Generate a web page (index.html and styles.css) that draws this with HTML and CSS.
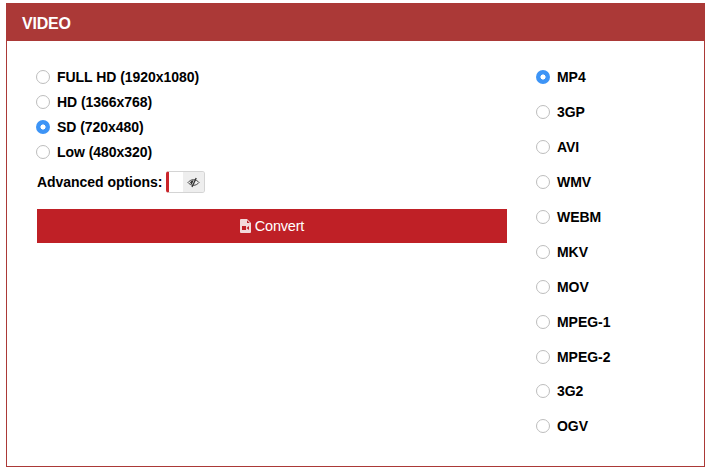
FILE: index.html
```html
<!DOCTYPE html>
<html lang="en">
<head>
<meta charset="utf-8">
<title>Video</title>
<link rel="stylesheet" href="styles.css">
</head>
<body>
<section class="panel">
  <h2 class="panel-head">VIDEO</h2>
  <div class="panel-body">
    <div class="left">
      <label class="opt"><span class="radio"></span>FULL HD (1920x1080)</label>
      <label class="opt"><span class="radio"></span>HD (1366x768)</label>
      <label class="opt"><span class="radio on"></span>SD (720x480)</label>
      <label class="opt"><span class="radio"></span>Low (480x320)</label>
      <div class="advanced">
        <span class="adv-label">Advanced options:</span>
        <span class="toggle">
          <span class="toggle-on"></span>
          <span class="toggle-off">
            <svg width="13" height="11" viewBox="0 0 13 11"><path d="M1 5.500C2.500 3.700 4.300 2.700 6.500 2.700s4 1 5.500 2.800c-1.500 1.800-3.300 2.800-5.500 2.800S2.500 7.300 1 5.500z" fill="none" stroke="#333" stroke-width=".9"/><path d="M3 5.500C3.500 4.200 4.800 3.300 6.700 3.200L4.800 7.500C4 7 3.400 6.300 3 5.500z" fill="#333"/><path d="M9.200 1 5 10" stroke="#333" stroke-width="1.300" fill="none"/></svg>
          </span>
        </span>
      </div>
      <button class="convert" type="button">
        <svg class="file-icon" width="11" height="14" viewBox="0 0 11 14"><path fill-rule="evenodd" d="M1 0h6l4 4v9a1 1 0 0 1-1 1H1a1 1 0 0 1-1-1V1a1 1 0 0 1 1-1zm6 1.200V4h2.800zM2 7v4h4V7zm4.500 2 2.500 2V7z" fill="#f3d9da"/></svg>
        Convert
      </button>
    </div>
    <div class="right">
      <label class="opt fmt"><span class="radio on"></span>MP4</label>
      <label class="opt fmt"><span class="radio"></span>3GP</label>
      <label class="opt fmt"><span class="radio"></span>AVI</label>
      <label class="opt fmt"><span class="radio"></span>WMV</label>
      <label class="opt fmt"><span class="radio"></span>WEBM</label>
      <label class="opt fmt"><span class="radio"></span>MKV</label>
      <label class="opt fmt"><span class="radio"></span>MOV</label>
      <label class="opt fmt"><span class="radio"></span>MPEG-1</label>
      <label class="opt fmt"><span class="radio"></span>MPEG-2</label>
      <label class="opt fmt"><span class="radio"></span>3G2</label>
      <label class="opt fmt"><span class="radio"></span>OGV</label>
    </div>
  </div>
</section>
</body>
</html>
```

FILE: styles.css
```css
* { box-sizing: border-box; }
html, body { margin: 0; padding: 0; background: #fff; }
body {
  width: 708px;
  height: 472px;
  overflow: hidden;
  padding: 3px 3px 0 6px;
  font-family: "Liberation Sans", Arial, sans-serif;
  color: #000;
}
.panel {
  width: 699px;
  height: 464px;
  border: 1px solid #ab3937;
  border-top: 0;
}
.panel-head {
  margin: 0 -1px;
  height: 38px;
  background: #ab3937;
  color: #fff;
  font-size: 16px;
  font-weight: 700;
  line-height: 41px;
  padding-left: 16px;
  letter-spacing: -0.2px;
}
.panel-body {
  display: flex;
  padding: 23px 0 0 30px;
}
.left { width: 470px; display: flex; flex-direction: column; }
.right { margin-left: 29px; margin-top: -4px; display: flex; flex-direction: column; }
.opt {
  display: flex;
  align-items: center;
  height: 25px;
  font-size: 14px;
  font-weight: 700;
  white-space: nowrap;
  letter-spacing: -0.04px;
}
.fmt { height: 34.9px; }
.radio {
  width: 14px;
  height: 14px;
  margin-right: 7px;
  border-radius: 50%;
  border: 1.5px solid #bdbdbd;
  background: #fff;
  flex: none;
}
.left .radio { margin-left: -1px; }
.radio.on {
  border: 0;
  background: radial-gradient(circle, #fff 0 2.2px, #3d94f6 2.9px);
}
.advanced {
  display: flex;
  align-items: center;
  height: 22px;
  margin-top: 7px;
}
.adv-label { font-size: 14px; font-weight: 700; margin-right: 4px; letter-spacing: -0.04px; }
.toggle {
  display: flex;
  width: 39px;
  height: 22px;
  border: 1px solid #d4d4d4;
  border-left: 3px solid #c9252b;
  border-radius: 3px;
  background: #fff;
  overflow: hidden;
}
.toggle-on { width: 14px; }
.toggle-off {
  flex: 1;
  background: #eeeeee;
  display: flex;
  align-items: center;
  justify-content: center;
}
.convert {
  margin-top: 16px;
  width: 470px;
  height: 34px;
  border: 0;
  padding: 0;
  background: #bf2026;
  color: #fff;
  font: 400 14.5px "Liberation Sans", Arial, sans-serif;
  display: flex;
  align-items: center;
  justify-content: center;
  gap: 4px;
  letter-spacing: -0.2px;
}
.file-icon { flex: none; }
```
